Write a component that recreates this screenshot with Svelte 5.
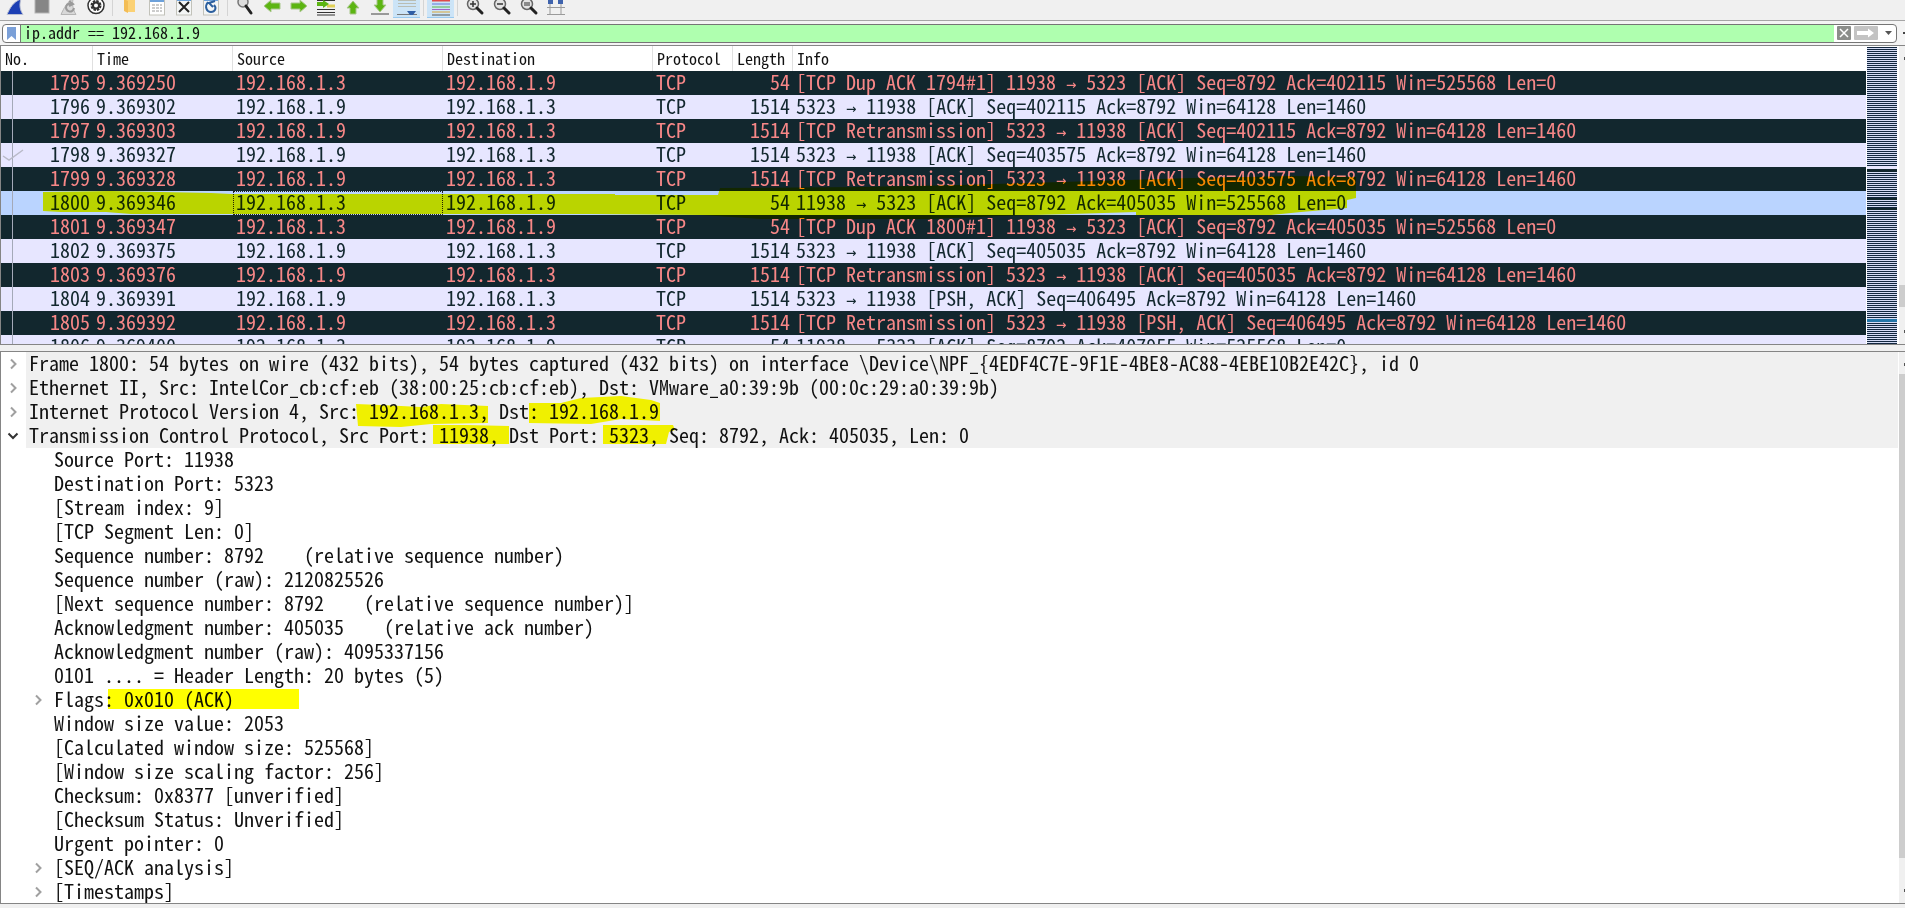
<script lang="ts">
  interface Packet {
    no: number;
    time: string;
    src: string;
    dst: string;
    len: number;
    info: string;
    kind: 'bad' | 'tcp' | 'selected';
  }

  interface Field {
    text: string;
    level: 0 | 1;
    open?: boolean;
  }

  const A = '192.168.1.3';
  const B = '192.168.1.9';

  const packets: Packet[] = [
    { no: 1795, time: '9.369250', src: A, dst: B, len: 54, kind: 'bad', info: '[TCP Dup ACK 1794#1] 11938 → 5323 [ACK] Seq=8792 Ack=402115 Win=525568 Len=0' },
    { no: 1796, time: '9.369302', src: B, dst: A, len: 1514, kind: 'tcp', info: '5323 → 11938 [ACK] Seq=402115 Ack=8792 Win=64128 Len=1460' },
    { no: 1797, time: '9.369303', src: B, dst: A, len: 1514, kind: 'bad', info: '[TCP Retransmission] 5323 → 11938 [ACK] Seq=402115 Ack=8792 Win=64128 Len=1460' },
    { no: 1798, time: '9.369327', src: B, dst: A, len: 1514, kind: 'tcp', info: '5323 → 11938 [ACK] Seq=403575 Ack=8792 Win=64128 Len=1460' },
    { no: 1799, time: '9.369328', src: B, dst: A, len: 1514, kind: 'bad', info: '[TCP Retransmission] 5323 → 11938 [ACK] Seq=403575 Ack=8792 Win=64128 Len=1460' },
    { no: 1800, time: '9.369346', src: A, dst: B, len: 54, kind: 'selected', info: '11938 → 5323 [ACK] Seq=8792 Ack=405035 Win=525568 Len=0' },
    { no: 1801, time: '9.369347', src: A, dst: B, len: 54, kind: 'bad', info: '[TCP Dup ACK 1800#1] 11938 → 5323 [ACK] Seq=8792 Ack=405035 Win=525568 Len=0' },
    { no: 1802, time: '9.369375', src: B, dst: A, len: 1514, kind: 'tcp', info: '5323 → 11938 [ACK] Seq=405035 Ack=8792 Win=64128 Len=1460' },
    { no: 1803, time: '9.369376', src: B, dst: A, len: 1514, kind: 'bad', info: '[TCP Retransmission] 5323 → 11938 [ACK] Seq=405035 Ack=8792 Win=64128 Len=1460' },
    { no: 1804, time: '9.369391', src: B, dst: A, len: 1514, kind: 'tcp', info: '5323 → 11938 [PSH, ACK] Seq=406495 Ack=8792 Win=64128 Len=1460' },
    { no: 1805, time: '9.369392', src: B, dst: A, len: 1514, kind: 'bad', info: '[TCP Retransmission] 5323 → 11938 [PSH, ACK] Seq=406495 Ack=8792 Win=64128 Len=1460' },
    { no: 1806, time: '9.369400', src: A, dst: B, len: 54, kind: 'tcp', info: '11938 → 5323 [ACK] Seq=8792 Ack=407955 Win=525568 Len=0' },
  ];

  const fields: Field[] = [
    { level: 0, open: false, text: 'Frame 1800: 54 bytes on wire (432 bits), 54 bytes captured (432 bits) on interface \\Device\\NPF_{4EDF4C7E-9F1E-4BE8-AC88-4EBE10B2E42C}, id 0' },
    { level: 0, open: false, text: 'Ethernet II, Src: IntelCor_cb:cf:eb (38:00:25:cb:cf:eb), Dst: VMware_a0:39:9b (00:0c:29:a0:39:9b)' },
    { level: 0, open: false, text: 'Internet Protocol Version 4, Src: 192.168.1.3, Dst: 192.168.1.9' },
    { level: 0, open: true, text: 'Transmission Control Protocol, Src Port: 11938, Dst Port: 5323, Seq: 8792, Ack: 405035, Len: 0' },
    { level: 1, text: 'Source Port: 11938' },
    { level: 1, text: 'Destination Port: 5323' },
    { level: 1, text: '[Stream index: 9]' },
    { level: 1, text: '[TCP Segment Len: 0]' },
    { level: 1, text: 'Sequence number: 8792    (relative sequence number)' },
    { level: 1, text: 'Sequence number (raw): 2120825526' },
    { level: 1, text: '[Next sequence number: 8792    (relative sequence number)]' },
    { level: 1, text: 'Acknowledgment number: 405035    (relative ack number)' },
    { level: 1, text: 'Acknowledgment number (raw): 4095337156' },
    { level: 1, text: '0101 .... = Header Length: 20 bytes (5)' },
    { level: 1, open: false, text: 'Flags: 0x010 (ACK)' },
    { level: 1, text: 'Window size value: 2053' },
    { level: 1, text: '[Calculated window size: 525568]' },
    { level: 1, text: '[Window size scaling factor: 256]' },
    { level: 1, text: 'Checksum: 0x8377 [unverified]' },
    { level: 1, text: '[Checksum Status: Unverified]' },
    { level: 1, text: 'Urgent pointer: 0' },
    { level: 1, open: false, text: '[SEQ/ACK analysis]' },
    { level: 1, open: false, text: '[Timestamps]' },
  ];

  const tools = [
    'Start', 'Stop', 'Restart', 'Options', '|', 'Open', 'Save', 'Close', 'Reload', '|',
    'Find', 'Back', 'Forward', 'Go to packet', 'First', 'Last', 'Auto scroll', '|', 'Colorize', '|',
    'Zoom in', 'Zoom out', 'Normal size', 'Resize columns',
  ];
  const pressed = ['Auto scroll', 'Colorize'];

  let filter = $state('ip.addr == 192.168.1.9');
</script>

<div class="app">
  <div class="toolbar" role="toolbar" aria-label="Main">
    {#each tools as tool}
      {#if tool === '|'}
        <span class="sep"></span>
      {:else}
        <button class="tool" class:on={pressed.includes(tool)} aria-label={tool}>
          <svg width="22" height="18" viewBox="0 0 22 18">
            {#if tool === 'Start'}
              <path d="M3 14.500C6 8 9 2 17 -1C15 5 16 10 19 14.500Z" fill="#1c3fb4" stroke="#b9bfd2" />
            {:else if tool === 'Stop'}
              <rect x="4" y="-1" width="14" height="14" fill="#868686" stroke="#b5b5b5" />
            {:else if tool === 'Restart'}
              <path d="M3 14.500C6 8 9 2 15 -1C14 5 15 10 18 14.500Z" fill="#d8d8d8" stroke="#b4b4b4" />
              <path d="M14 4a4 4 0 1 0 2 4M11 1l4 3-4 2" fill="none" stroke="#9a9a9a" stroke-width="2" />
            {:else if tool === 'Options'}
              <circle cx="11" cy="5.500" r="8" fill="#fff" stroke="#333" stroke-width="1.500" />
              <circle cx="11" cy="5.500" r="4" fill="none" stroke="#333" stroke-width="3" stroke-dasharray="2.200 .9" />
              <circle cx="11" cy="5.500" r="3" fill="none" stroke="#333" stroke-width="2" />
            {:else if tool === 'Open'}
              <path d="M5 -1H16V12H8L5 10Z" fill="#fbd174" />
              <path d="M5 -1L9 1V13L5 11Z" fill="#f3bd55" />
            {:else if tool === 'Save'}
              <rect x="3.500" y="-1" width="15" height="16" fill="#fff" stroke="#c2c2ba" />
              <path d="M4 1H18" stroke="#6da1da" stroke-width="2" />
              <path d="M6 5H16M6 8H16M6 11H16" stroke="#9a9a9a" stroke-dasharray="3 1" />
            {:else if tool === 'Close'}
              <rect x="3.500" y="-1" width="15" height="16" fill="#f4f6f6" stroke="#c2c2ba" />
              <path d="M4 0H18" stroke="#6da1da" stroke-width="2" />
              <path d="M6 2L16 12M16 2L6 12" stroke="#222" stroke-width="2" />
            {:else if tool === 'Reload'}
              <rect x="3.500" y="-1" width="15" height="16" fill="#f4f6f6" stroke="#c2c2ba" />
              <path d="M4 0H18" stroke="#6da1da" stroke-width="2" />
              <path d="M8 2C4 7 7 12 11 12C15 12 17 8 14 5M15 1L9 3L13 7" fill="none" stroke="#2c5f9e" stroke-width="2" />
            {:else if tool === 'Find'}
              <circle cx="9" cy="2" r="5" fill="#ddd" stroke="#777" stroke-width="1.500" />
              <path d="M12 6L17 13" stroke="#222" stroke-width="3" stroke-linecap="round" />
            {:else if tool === 'Back' || tool === 'Forward'}
              <path
                d={tool === 'Back' ? 'M3 6L10 0V3H19V9H10V12Z' : 'M19 6L12 0V3H3V9H12V12Z'}
                fill="#5cb512" stroke="#a9c78d" stroke-linejoin="round"
              />
            {:else if tool === 'Go to packet'}
              <path d="M2 0.500H20M2 9.500H20M2 12.500H20M2 15H20" stroke="#333" />
              <path d="M12 6H20" stroke="#e0cf55" stroke-width="3" />
              <path d="M2 2H8V0L14 4L8 8V6H2Z" fill="#5cb512" />
            {:else if tool === 'First'}
              <path d="M11 1L17 8H14V14H8V8H5Z" fill="#5cb512" stroke="#a9c78d" stroke-linejoin="round" />
            {:else if tool === 'Last'}
              <path d="M11 12L5 5H8V-1H14V5H17Z" fill="#5cb512" stroke="#a9c78d" stroke-linejoin="round" />
              <path d="M2 14H20" stroke="#999" stroke-width="2" />
            {:else if tool === 'Auto scroll'}
              <path d="M2 0.500H20M2 3.500H20M2 6.500H20" stroke="#b9bdb4" />
              <path d="M1 14.500H21" stroke="#777" />
              <path d="M11 11H20L17 15H14Z" fill="#2f5ea6" />
            {:else if tool === 'Colorize'}
              <path d="M2 0.500H20" stroke="#e04a4a" stroke-width="2" />
              <path d="M2 4H20" stroke="#6079d8" />
              <path d="M2 7H20" stroke="#5fb44b" />
              <path d="M2 9.500H20" stroke="#a163c8" />
              <path d="M2 12H20" stroke="#d9a63b" />
              <path d="M2 15H20" stroke="#555" />
            {:else if tool === 'Resize columns'}
              <path d="M5 0V15M16 0V15M2 7.500H20M2 14.500H20" stroke="#9a9a9a" />
              <path d="M3 0L8 0V4H3ZM13 0H18V4H13Z" fill="#3f63ad" />
            {:else}
              <circle cx="9" cy="4" r="5.500" fill="#e4e4e4" stroke="#666" stroke-width="1.500" />
              <path d="M13 8L18 13" stroke="#222" stroke-width="3" stroke-linecap="round" />
              {#if tool === 'Zoom in'}
                <path d="M6 4H12M9 1V7" stroke="#333" stroke-width="1.500" />
              {:else if tool === 'Zoom out'}
                <path d="M6 4H12" stroke="#333" stroke-width="1.500" />
              {:else}
                <path d="M6 3H12M6 5H12" stroke="#333" />
              {/if}
            {/if}
          </svg>
        </button>
      {/if}
    {/each}
  </div>

  <div class="filterbar">
    <div class="filter">
      <button class="bookmark" aria-label="Bookmarks">
        <svg width="9" height="13" viewBox="0 0 9 13"><path d="M0 0H9V13L4.500 9L0 13Z" fill="#7ba0d8" /></svg>
      </button>
      <input aria-label="Display filter" bind:value={filter} spellcheck="false" />
      <button class="clear" aria-label="Clear filter">
        <svg width="14" height="14" viewBox="0 0 14 14">
          <rect width="14" height="14" rx="1" fill="#8b8d8a" />
          <path d="M3 3L11 11M11 3L3 11" stroke="#fff" stroke-width="1.500" />
        </svg>
      </button>
      <button class="apply" aria-label="Apply filter">
        <svg width="24" height="14" viewBox="0 0 24 14">
          <rect width="24" height="14" rx="1" fill="#c3c3c3" />
          <path d="M3 5H14V2.500L20 7L14 11.500V9H3Z" fill="#fff" />
        </svg>
      </button>
      <button class="recent" aria-label="Recent filters">
        <svg width="7" height="5" viewBox="0 0 7 5"><path d="M0 0H7L3.500 4Z" fill="#555" /></svg>
      </button>
    </div>
    <span class="plus"></span>
  </div>

  <div class="pane packets">
    <div class="list">
      <table>
        <colgroup>
          <col class="c-no" /><col class="c-time" /><col class="c-addr" /><col class="c-addr" />
          <col class="c-proto" /><col class="c-len" /><col />
        </colgroup>
        <thead>
          <tr>
            <th>No.</th><th>Time</th><th>Source</th><th>Destination</th><th>Protocol</th><th>Length</th><th>Info</th>
          </tr>
        </thead>
        <tbody>
          {#each packets as p (p.no)}
            {@const [from, to] = p.info.split('→')}
            <tr class={p.kind}>
              <td class="num">{p.no}</td>
              <td>{p.time}</td>
              <td class:focus={p.kind === 'selected'}>{p.src}</td>
              <td>{p.dst}</td>
              <td>TCP</td>
              <td class="num">{p.len}</td>
              <td>{from}<span class="arrow">→</span>{to}</td>
            </tr>
          {/each}
        </tbody>
      </table>
      <!-- conversation line with the acked packet ticked -->
      <svg class="relation" width="24" height="274" viewBox="0 0 24 274">
        <path d="M11.500 0V274" stroke="#a4a9b8" />
        <path d="M2 85L8 89L22 79" fill="none" stroke="#b9bac8" stroke-width="1.500" />
      </svg>
      <svg class="marker" width="1400" height="298" viewBox="0 0 1400 298">
        <path
          d="M42 146L110 145L210 147L230 148H614V149H717L719 142L860 141L960 139L1060 136L1190 132L1290 130L1355 131V152L1346 154V162L1300 166L1270 169H1135V166L1070 168L1000 170L930 173H760L700 169L590 168H130L105 166L60 166L42 165Z"
          fill="#ff0"
        />
      </svg>
    </div>
    <div class="minimap"></div>
    <div class="scroll">
      <svg width="6" height="298" viewBox="0 0 6 298">
        <path d="M5 11H6V14H5ZM5 284H6V287H5Z" fill="#555" />
        <path d="M0 239H6V261H0Z" fill="#cdcdcd" />
      </svg>
    </div>
  </div>

  <div class="pane details">
    <ul class="tree">
      {#each fields as f}
        <li class="level{f.level}">
          <span class="twist">
            {#if f.open === true}
              <svg width="12" height="12" viewBox="0 0 12 12"><path d="M1.500 3.500L6 8L10.500 3.500" fill="none" stroke="#333" stroke-width="2" /></svg>
            {:else if f.open === false}
              <svg width="12" height="12" viewBox="0 0 12 12"><path d="M4 1.500L8.500 6L4 10.500" fill="none" stroke="#a0a0a0" stroke-width="2" /></svg>
            {/if}
          </span>
          <span class="text">{f.text}</span>
        </li>
      {/each}
    </ul>
    <svg class="marker" width="700" height="400" viewBox="0 0 700 400">
      <path d="M355 52L380 53L420 55L440 52L487 54V71L430 72L400 75L357 74Z" fill="#ff0" />
      <path d="M528 51L560 51L580 46L620 44L650 48L659 51V69L620 67L590 72L528 71Z" fill="#ff0" />
      <path d="M432 73L465 73L508 74V92H432ZM602 73H672L674 78L668 80L665 92H602Z" fill="#ff0" />
      <path d="M107 337H298V357H107Z" fill="#ff0" />
    </svg>
    <div class="scroll">
      <svg width="6" height="551" viewBox="0 0 6 551">
        <path d="M5 11H6V14H5ZM5 537H6V540H5Z" fill="#555" />
        <path d="M0 22H6V506H0Z" fill="#cdcdcd" />
      </svg>
    </div>
  </div>
</div>

<style>
  :global(body) { margin: 0; background: #f0f0f0; }
  .app { --mono: "Noto Sans Mono CJK SC", "Liberation Mono", monospace; display: grid; grid-template-rows: 20px 25px 300px 1fr; height: 100vh; box-sizing: border-box; padding-bottom: 4px; overflow: hidden; background: #f0f0f0; font-family: var(--mono); font-size: 20px; color: #111; }
  button { border: 0; padding: 0; margin: 0; background: none; }

  .toolbar { display: flex; overflow: hidden; padding-left: 1px; }
  .tool { display: flex; justify-content: center; width: 27px; height: 18px; }
  .tool.on { background: #cce4f7; box-shadow: inset 0 -1px #99c9ef; }
  .sep { width: 1px; margin: 0 3px; height: 16px; background: #d4d4d4; }

  .filterbar { display: flex; align-items: center; border-top: 1px solid #a5a5a5; background: #f4f4f4; overflow: hidden; }
  .filter { flex: 1; display: flex; align-items: center; height: 19px; margin-left: 2px; box-sizing: border-box; border: 1px solid #757575; border-radius: 4px; background: #fff; overflow: hidden; }
  .bookmark { display: flex; align-items: center; justify-content: center; width: 17px; height: 17px; }
  .filter input { flex: 1; min-width: 0; height: 17px; box-sizing: border-box; border: 0; border-left: 1px solid #757575; padding: 0 3px 2px; background: #afffaf; font: 16px/15px var(--mono); color: #111; outline: none; }
  .clear { display: flex; margin: 0 3px; }
  .apply { display: flex; }
  .recent { display: flex; margin: 0 4px 0 7px; }
  .plus { width: 2px; height: 2px; margin-left: 6px; background: #444; }

  .pane { position: relative; display: flex; overflow: hidden; border: solid #858585; border-width: 1px 0 1px 1px; background: #fff; }
  .list { position: relative; flex: 1; min-width: 0; overflow: hidden; }
  table { width: 100%; table-layout: fixed; border-collapse: separate; border-spacing: 0; }
  .c-no { width: 92px; }
  .c-time { width: 140px; }
  .c-addr { width: 210px; }
  .c-proto { width: 80px; }
  .c-len { width: 60px; }
  th { height: 25px; box-sizing: border-box; padding: 0 0 0 4px; border-right: 1px solid #e0e0e0; font: 16px/25px var(--mono); text-align: left; white-space: nowrap; }
  th:last-child { border-right: 0; }
  td { height: 24px; box-sizing: border-box; padding: 0 3px; line-height: 22px; vertical-align: top; white-space: pre; overflow: hidden; }
  .num { text-align: right; }
  .arrow { font: 17px/0 "DejaVu Sans Mono", monospace; }
  .bad { background: #12272e; color: #f78787; }
  .tcp { background: #e7e6ff; color: #12272e; }
  .selected { background: #bad4ff; color: #12272e; }
  .focus { outline: 1px dotted #222; outline-offset: -1px; }
  .relation { position: absolute; left: 0; top: 25px; }
  .marker { position: absolute; left: 0; top: 0; mix-blend-mode: multiply; pointer-events: none; }

  .minimap { width: 30px; margin: 1px 1px 0; background:
    linear-gradient(#e7e6ff, #e7e6ff) 0 119px / 100% 3px no-repeat,
    linear-gradient(#12272e, #12272e) 0 122px / 100% 3px no-repeat,
    linear-gradient(#12272e, #12272e) 0 151px / 100% 2px no-repeat,
    linear-gradient(#12272e, #12272e) 0 161px / 100% 2px no-repeat,
    linear-gradient(#2476a8, #2476a8) 0 272px / 100% 3px no-repeat,
    repeating-linear-gradient(#12273f 0 1px, #d5dcf5 1px 2px); }
  .scroll { width: 6px; margin-left: 1px; background: #f0f0f0; }

  .details { margin-top: 6px; }
  .tree { flex: 1; min-width: 0; margin: 0; padding: 0; list-style: none; }
  li { display: flex; height: 24px; line-height: 22px; white-space: pre; }
  .twist { display: flex; align-items: center; justify-content: center; width: 24px; }
  .level0 .text { flex: 1; padding-left: 3px; margin-left: 1px; background: #f0f0f0; }
  .level1 { padding-left: 25px; }
  .level1 .text { padding-left: 4px; }
</style>
